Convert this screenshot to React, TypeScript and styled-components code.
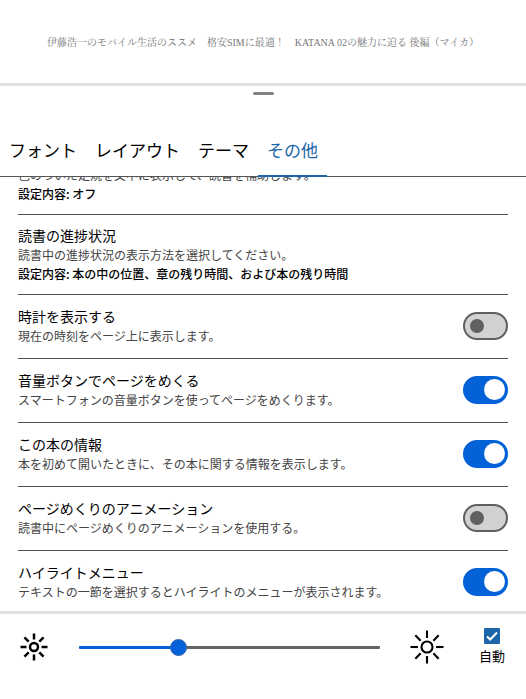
import React, { useId, useState } from "react";
import styled, { createGlobalStyle } from "styled-components";

const blue = "#0462d8";
const linkBlue = "#1a66a8";

const GlobalStyle = createGlobalStyle`
  *, *::before, *::after { box-sizing: border-box; }
  body {
    margin: 0;
    background: #fff;
    color: #000;
    font-family: "Noto Sans CJK JP", sans-serif;
  }
`;

const Screen = styled.div`
  display: flex;
  flex-direction: column;
  height: 100vh;
  overflow: hidden;
`;

const BookHeader = styled.header`
  flex: none;
  padding: 33px 16px 30px;
  font-family: "Liberation Serif", "Noto Serif CJK JP", "Noto Sans CJK JP", serif;
  font-size: 10px;
  line-height: 20px;
  text-align: center;
  white-space: nowrap;
  color: #777;
`;

const Sheet = styled.section`
  flex: 1;
  min-height: 0;
  display: flex;
  flex-direction: column;
  border-top: 3px solid #e2e2e2;
`;

const Handle = styled.div`
  flex: none;
  align-self: center;
  width: 21px;
  height: 3px;
  margin: 6px 0 32px;
  border-radius: 2px;
  background: #828282;
`;

const TabBar = styled.div`
  flex: none;
  display: flex;
  border-bottom: 1px solid #555;
`;

const Tab = styled.button<{ $active: boolean }>`
  margin: 0 0 -1px;
  padding: 10px 9px 13px;
  border: 0;
  border-bottom: 2px solid ${(p) => (p.$active ? linkBlue : "transparent")};
  background: none;
  color: ${(p) => (p.$active ? linkBlue : "#000")};
  font-family: inherit;
  font-size: 17px;
  line-height: 25px;
  cursor: pointer;
`;

const ListViewport = styled.div`
  flex: 1;
  min-height: 0;
  overflow: hidden;
`;

const List = styled.div`
  margin-top: -22px;
  padding: 0 18px;
`;

const Row = styled.div<{ $roomy?: boolean }>`
  display: flex;
  align-items: center;
  justify-content: space-between;
  gap: 16px;
  padding: ${(p) => (p.$roomy ? "11px 0 13px" : "10px 0 11px")};
  border-bottom: 1px solid #505050;
  &:last-child { border-bottom: 0; }
`;

const Texts = styled.div`
  min-width: 0;
`;

const Title = styled.label`
  display: block;
  font-size: 14px;
  line-height: 20px;
`;

const Description = styled.div`
  font-size: 12px;
  line-height: 19px;
  color: #444;
`;

const Current = styled.div`
  font-size: 12px;
  line-height: 19px;
  font-weight: 500;
`;

const Switch = styled.input`
  appearance: none;
  flex: none;
  display: flex;
  align-items: center;
  width: 45px;
  height: 28px;
  margin: 0;
  padding: 0 5px;
  border: 2px solid #606062;
  border-radius: 14px;
  background: #d0d1d3;
  cursor: pointer;
  &::before {
    content: "";
    width: 14px;
    height: 14px;
    border-radius: 50%;
    background: #606062;
  }
  &:checked {
    justify-content: flex-end;
    padding: 0 1px;
    border-color: ${blue};
    background: ${blue};
  }
  &:checked::before {
    width: 21px;
    height: 21px;
    background: #fff;
  }
`;

const BrightnessBar = styled.footer`
  flex: none;
  display: flex;
  align-items: center;
  padding: 14px 21px 33px 17px;
  border-top: 3px solid #e2e2e2;
`;

const Sun = styled.svg`
  flex: none;
  display: block;
  fill: none;
  stroke: #000;
`;

const Slider = styled.input`
  appearance: none;
  flex: 1;
  min-width: 0;
  height: 18px;
  margin: 0 30px 0 28px;
  background: transparent;
  cursor: pointer;
  &::-webkit-slider-runnable-track {
    height: 3px;
    border-radius: 1px;
    background: linear-gradient(${blue}, ${blue}) 0 0 / var(--level) 100% no-repeat #646466;
  }
  &::-webkit-slider-thumb {
    appearance: none;
    width: 17px;
    height: 17px;
    margin-top: -7px;
    border: 1px solid #3a66a8;
    border-radius: 50%;
    background: ${blue};
  }
`;

const Auto = styled.label`
  flex: none;
  display: flex;
  flex-direction: column;
  align-items: center;
  margin-left: 35px;
  font-size: 13px;
  line-height: 20px;
  cursor: pointer;
`;

const CheckFrame = styled.span`
  display: grid;
  width: 16px;
  height: 16px;
  margin-bottom: 2px;
  > * { grid-area: 1 / 1; }
`;

const CheckInput = styled.input`
  appearance: none;
  width: 16px;
  height: 16px;
  margin: 0;
  border: 1px solid ${linkBlue};
  border-radius: 1px;
  background: #fff;
  &:checked { background: ${linkBlue}; }
`;

const CheckMark = styled.svg`
  pointer-events: none;
  fill: none;
  stroke: #fff;
  stroke-width: 2;
`;

type Setting = {
  title?: string;
  description: string;
  current?: string;
  on?: boolean;
};

const tabs = ["フォント", "レイアウト", "テーマ", "その他"];

const settings: Setting[] = [
  { description: "色のついた定規を文中に表示して、読書を補助します。", current: "オフ" },
  {
    title: "読書の進捗状況",
    description: "読書中の進捗状況の表示方法を選択してください。",
    current: "本の中の位置、章の残り時間、および本の残り時間",
  },
  { title: "時計を表示する", description: "現在の時刻をページ上に表示します。", on: false },
  {
    title: "音量ボタンでページをめくる",
    description: "スマートフォンの音量ボタンを使ってページをめくります。",
    on: true,
  },
  {
    title: "この本の情報",
    description: "本を初めて開いたときに、その本に関する情報を表示します。",
    on: true,
  },
  {
    title: "ページめくりのアニメーション",
    description: "読書中にページめくりのアニメーションを使用する。",
    on: false,
  },
  {
    title: "ハイライトメニュー",
    description: "テキストの一節を選択するとハイライトのメニューが表示されます。",
    on: true,
  },
];

function SettingRow({ title, description, current, on }: Setting) {
  const id = useId();
  const toggles = on !== undefined;
  return (
    <Row $roomy={toggles}>
      <Texts>
        {title && (
          <Title as={toggles ? "label" : "div"} {...(toggles ? { htmlFor: id } : {})}>
            {title}
          </Title>
        )}
        <Description>{description}</Description>
        {current && <Current>設定内容: {current}</Current>}
      </Texts>
      {toggles && <Switch id={id} type="checkbox" role="switch" defaultChecked={on} />}
    </Row>
  );
}

function SunIcon({ size, radius, inner, outer, stroke }: {
  size: number;
  radius: number;
  inner: number;
  outer: number;
  stroke: number;
}) {
  return (
    <Sun width={size} height={size} viewBox="-17 -17 34 34" strokeWidth={stroke} aria-hidden="true">
      <circle r={radius} />
      {[0, 45, 90, 135, 180, 225, 270, 315].map((angle) => (
        <path key={angle} d={`M0 ${-inner}V${-outer}`} transform={`rotate(${angle})`} />
      ))}
    </Sun>
  );
}

export default function App() {
  const [active, setActive] = useState("その他");
  const [level, setLevel] = useState(32);
  return (
    <>
      <GlobalStyle />
      <Screen>
        <BookHeader>
          伊藤浩一のモバイル生活のススメ　格安SIMに最適！　KATANA 02の魅力に迫る 後編（マイカ）
        </BookHeader>
        <Sheet>
          <Handle />
          <TabBar role="tablist">
            {tabs.map((name) => (
              <Tab
                key={name}
                type="button"
                role="tab"
                aria-selected={name === active}
                $active={name === active}
                onClick={() => setActive(name)}
              >
                {name}
              </Tab>
            ))}
          </TabBar>
          <ListViewport>
            <List>
              {settings.map((item) => (
                <SettingRow key={item.description} {...item} />
              ))}
            </List>
          </ListViewport>
        </Sheet>
        <BrightnessBar>
          <SunIcon size={34} radius={4} inner={7.5} outer={13.5} stroke={2.5} />
          <Slider
            type="range"
            aria-label="明るさ"
            value={level}
            onChange={(e) => setLevel(Number(e.target.value))}
            style={{ "--level": `${level}%` } as React.CSSProperties}
          />
          <SunIcon size={34} radius={5.5} inner={9} outer={16.5} stroke={2.1} />
          <Auto>
            <CheckFrame>
              <CheckInput type="checkbox" defaultChecked />
              <CheckMark width="16" height="16" viewBox="0 0 16 16" aria-hidden="true">
                <path d="M3 8.5l3.2 3L13 4.5" />
              </CheckMark>
            </CheckFrame>
            自動
          </Auto>
        </BrightnessBar>
      </Screen>
    </>
  );
}
